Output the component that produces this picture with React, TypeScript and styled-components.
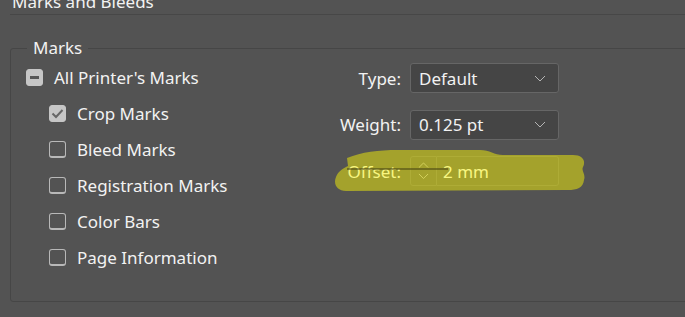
import React from 'react'
import styled, { createGlobalStyle } from 'styled-components'

const GlobalStyle = createGlobalStyle`
  html, body {
    margin: 0;
    padding: 0;
    background: #535353;
  }
  body {
    font-family: 'Noto Sans', 'Open Sans', sans-serif;
    color: #f2f2f2;
  }
`

const StyledDialog = styled.div`
  position: relative;
  width: 685px;
  height: 317px;
  overflow: hidden;
  background: #535353;
`

const StyledTitle = styled.div`
  margin: -9px 0 0 12px;
  font-size: 17px;
  line-height: 22px;
  height: 22px;
`

const StyledRule = styled.div`
  margin: 1px 0 0 10px;
  border-top: 1px solid #474747;
`

const StyledGroup = styled.fieldset`
  margin: 23px -20px 0 10px;
  padding: 0;
  height: 262px;
  border: 1px solid #464646;
  border-radius: 3px;
  display: flex;
`

const StyledLegend = styled.legend`
  margin-left: 16px;
  padding: 0 6px;
  font-size: 17px;
  line-height: 20px;
`

const StyledMarks = styled.div`
  box-sizing: border-box;
  display: flex;
  flex-direction: column;
  padding: 1px 0 0 15px;
  width: 299px;
`

const StyledMarkRow = styled.label<{ $indent?: boolean }>`
  display: flex;
  align-items: center;
  gap: 11px;
  height: 36px;
  padding-left: ${(p) => (p.$indent ? '23px' : '0')};
  font-size: 17px;
`

const StyledBox = styled.span<{ $state: 'on' | 'off' | 'mixed' }>`
  box-sizing: border-box;
  width: 17px;
  height: 17px;
  border-radius: 3px;
  display: flex;
  align-items: center;
  justify-content: center;
  background: ${(p) => (p.$state === 'off' ? 'transparent' : '#c6c6c6')};
  border: 1px solid ${(p) => (p.$state === 'off' ? '#b8b8b8' : '#c6c6c6')};
  border-bottom-width: ${(p) => (p.$state === 'off' ? '2px' : '1px')};
`

const StyledMinus = styled.span`
  width: 9px;
  height: 3px;
  background: #575757;
`

const StyledSettings = styled.div`
  display: grid;
  grid-template-columns: 91px 149px;
  column-gap: 9px;
  row-gap: 16.5px;
  align-items: center;
  align-content: start;
  padding-top: 5px;
`

const StyledLabel = styled.span`
  text-align: right;
  font-size: 17px;
`

const StyledSelect = styled.div`
  box-sizing: border-box;
  height: 30px;
  display: flex;
  align-items: center;
  justify-content: space-between;
  padding: 0 12px 0 8px;
  background: #454545;
  border: 1px solid #666666;
  border-radius: 3px;
  font-size: 17px;
`

const StyledSpinField = styled.div`
  display: flex;
  height: 30px;
`

const StyledSpinner = styled.div`
  box-sizing: border-box;
  width: 27px;
  border: 1px solid #666666;
  border-radius: 3px 0 0 3px;
  display: flex;
  flex-direction: column;
  align-items: center;
  justify-content: space-around;
  padding: 3px 0;
`

const StyledInput = styled.div`
  box-sizing: border-box;
  flex: 1;
  border: 1px solid #666666;
  border-left: none;
  border-radius: 0 3px 3px 0;
  padding-left: 6px;
  display: flex;
  align-items: center;
  font-size: 17px;
`

const StyledMarker = styled.svg`
  position: absolute;
  left: 0;
  top: 0;
  pointer-events: none;
`

const Chevron: React.FC<{ up?: boolean; size?: number }> = ({ up, size = 12 }) => (
  <svg width={size} height={size / 2 + 1} viewBox="0 0 12 7">
    <path
      d={up ? 'M1 6 L6 1 L11 6' : 'M1 1 L6 6 L11 1'}
      fill="none"
      stroke="#b5b5b5"
      strokeWidth="1"
    />
  </svg>
)

const Check = () => (
  <svg width="13" height="11" viewBox="0 0 13 11">
    <path d="M1.5 5.5 L5 9 L11.5 2" fill="none" stroke="#666" strokeWidth="2" />
  </svg>
)

const marks = [
  { text: 'Crop Marks', on: true },
  { text: 'Bleed Marks', on: false },
  { text: 'Registration Marks', on: false },
  { text: 'Color Bars', on: false },
  { text: 'Page Information', on: false },
]

const App: React.FC = () => {
  return (
    <StyledDialog>
      <GlobalStyle />
      <StyledTitle>Marks and Bleeds</StyledTitle>
      <StyledRule />
      <StyledGroup>
        <StyledLegend>Marks</StyledLegend>
        <StyledMarks>
          <StyledMarkRow>
            <StyledBox $state="mixed">
              <StyledMinus />
            </StyledBox>
            All Printer's Marks
          </StyledMarkRow>
          {marks.map((m) => (
            <StyledMarkRow $indent key={m.text}>
              <StyledBox $state={m.on ? 'on' : 'off'}>{m.on && <Check />}</StyledBox>
              {m.text}
            </StyledMarkRow>
          ))}
        </StyledMarks>
        <StyledSettings>
          <StyledLabel>Type:</StyledLabel>
          <StyledSelect>
            Default
            <Chevron />
          </StyledSelect>
          <StyledLabel>Weight:</StyledLabel>
          <StyledSelect>
            0.125 pt
            <Chevron />
          </StyledSelect>
          <StyledLabel>Offset:</StyledLabel>
          <StyledSpinField>
            <StyledSpinner>
              <Chevron up size={11} />
              <Chevron size={11} />
            </StyledSpinner>
            <StyledInput>2 mm</StyledInput>
          </StyledSpinField>
        </StyledSettings>
      </StyledGroup>
      <StyledMarker width="685" height="317" viewBox="0 0 685 317">
        <path
          d="M347 158 C362 152 378 150 398 150 L480 150 C490 150 494 155 503 155 L573 155 C583 155 586 161 583 167 C581 171 586 174 584 180 C583 188 577 190 568 190 L346 191 C337 191 333 184 336 177 C338 171 344 168 348 166 Z"
          fill="rgba(255, 250, 0, 0.47)"
        />
        <path d="M347 169 L448 169" stroke="rgba(70, 66, 20, 0.55)" strokeWidth="2" />
      </StyledMarker>
    </StyledDialog>
  )
}

export default App
